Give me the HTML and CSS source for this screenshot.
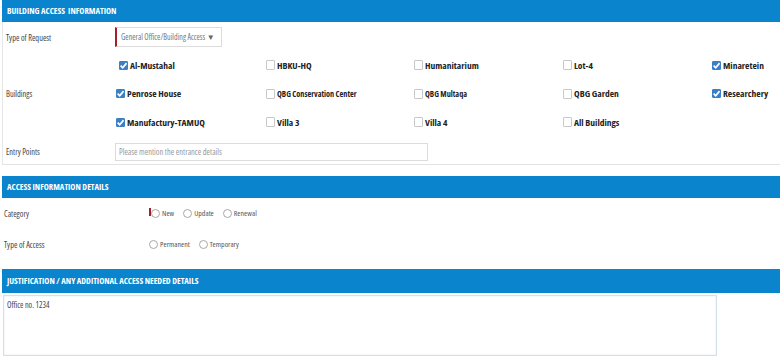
FILE: index.html
```html
<!DOCTYPE html>
<html lang="en">
<head>
    <meta charset="UTF-8">
    <title>Building Access</title>
    <link rel="stylesheet" href="styles.css">
</head>
<body>
    <div class="page">
        <div class="bar">BUILDING ACCESS&nbsp; INFORMATION</div>
        <div class="section first">
            <div class="row request">
                <span class="lbl">Type of Request</span>
                <div class="select">General Office/Building Access <span class="caret">&#9660;</span></div>
            </div>
            <div class="buildings">
                <span class="lbl">Buildings</span>
                <div class="grid">
                    <label class="chk lead"><input type="checkbox" checked> Al-Mustahal</label>
                    <label class="chk"><input type="checkbox"> HBKU-HQ</label>
                    <label class="chk"><input type="checkbox"> Humanitarium</label>
                    <label class="chk"><input type="checkbox"> Lot-4</label>
                    <label class="chk"><input type="checkbox" checked> Minaretein</label>

                    <label class="chk"><input type="checkbox" checked> Penrose House</label>
                    <label class="chk small"><input type="checkbox"> QBG Conservation Center</label>
                    <label class="chk small"><input type="checkbox"> QBG Multaqa</label>
                    <label class="chk"><input type="checkbox"> QBG Garden</label>
                    <label class="chk"><input type="checkbox" checked> Researchery</label>

                    <label class="chk"><input type="checkbox" checked> Manufactury-TAMUQ</label>
                    <label class="chk"><input type="checkbox"> Villa 3</label>
                    <label class="chk"><input type="checkbox"> Villa 4</label>
                    <label class="chk"><input type="checkbox"> All Buildings</label>
                </div>
            </div>
            <div class="row entry">
                <span class="lbl">Entry Points</span>
                <input type="text" class="field" placeholder="Please mention the entrance details">
            </div>
        </div>

        <div class="bar">ACCESS INFORMATION DETAILS</div>
        <div class="section second">
            <div class="row radios">
                <span class="lbl wide">Category</span>
                <span class="req"></span>
                <label class="rad"><input type="radio" name="cat"> New</label>
                <label class="rad"><input type="radio" name="cat"> Update</label>
                <label class="rad"><input type="radio" name="cat"> Renewal</label>
            </div>
            <div class="row radios">
                <span class="lbl wide">Type of Access</span>
                <label class="rad"><input type="radio" name="acc"> Permanent</label>
                <label class="rad"><input type="radio" name="acc"> Temporary</label>
            </div>
        </div>

        <div class="bar tall">JUSTIFICATION / ANY ADDITIONAL ACCESS NEEDED DETAILS</div>
        <textarea class="notes">Office no. 1234</textarea>
    </div>
</body>
</html>
```

FILE: styles.css
```css
html, body {
    margin: 0;
    padding: 0;
    background: #ffffff;
    font-family: "Open Sans", "Liberation Sans", Arial, sans-serif;
    font-stretch: 75%;
    color: #333;
}

.page {
    width: 780px;
    padding-left: 2px;
    box-sizing: border-box;
}

.bar {
    height: 22px;
    line-height: 22px;
    background: #0a84cc;
    color: #fff;
    font-size: 8.6px;
    font-weight: bold;
    padding-left: 5px;
}

.bar.tall {
    height: 24px;
    line-height: 24px;
}

.section.first {
    border-left: 1px solid #e6e6e6;
    border-bottom: 1px solid #e3e3e3;
    padding: 5px 0 3px 0;
    margin-bottom: 11px;
}

.row {
    display: flex;
    align-items: center;
}

.lbl {
    width: 109px;
    padding-left: 3px;
    font-size: 8.3px;
    color: #444;
    flex: none;
}

.lbl.wide {
    width: 145px;
    padding-left: 2px;
}

.select {
    width: 100px;
    height: 18px;
    line-height: 18px;
    border: 1px solid #dcdcdc;
    border-left: 2px solid #a3202a;
    font-size: 8px;
    color: #777;
    padding-left: 4px;
    box-sizing: content-box;
    white-space: nowrap;
}

.caret {
    color: #666;
    font-size: 8px;
}

.buildings {
    display: flex;
    align-items: center;
    margin-top: 4px;
}

.grid {
    display: grid;
    grid-template-columns: 150px 148px 149px 149px auto;
    grid-auto-rows: 28.5px;
    align-items: center;
}

.chk {
    display: flex;
    align-items: center;
    font-size: 9.5px;
    font-weight: bold;
    color: #222;
    white-space: nowrap;
}

.chk.small {
    font-size: 8.2px;
}

.chk.lead {
    padding-left: 3px;
}

.chk input {
    appearance: none;
    width: 9px;
    height: 10px;
    margin: 0 2px 0 1px;
    border: 1px solid #c8c8c8;
    border-radius: 1px;
    background: #fff;
    box-sizing: border-box;
}

.chk input:checked {
    border-color: #3b7fc4;
    background: #3b7fc4 url("data:image/svg+xml,%3Csvg xmlns='http://www.w3.org/2000/svg' viewBox='0 0 10 10'%3E%3Cpath d='M1.8 5.2 L4.1 7.5 L8.4 2.4' fill='none' stroke='white' stroke-width='1.9'/%3E%3C/svg%3E") center/9px no-repeat;
    height: 9px;
}

.entry {
    margin-top: 6px;
}

.field {
    width: 313px;
    height: 18px;
    box-sizing: border-box;
    border: 1px solid #dcdcdc;
    font-family: inherit;
    font-stretch: inherit;
    font-size: 8.4px;
    padding: 0 3px;
    color: #555;
}

.field::placeholder {
    color: #999;
}

.section.second {
    margin-bottom: 9px;
}

.radios {
    height: 31px;
}

.req {
    width: 2px;
    height: 8px;
    margin-top: -3px;
    background: #a3202a;
}

.rad {
    display: flex;
    align-items: center;
    font-size: 7.8px;
    color: #555;
    margin-right: 9px;
}

.rad input {
    appearance: none;
    width: 9px;
    height: 9px;
    margin: 0 2px 0 0;
    border: 1px solid #a8a8a8;
    border-radius: 50%;
    background: #fff;
}

.notes {
    display: block;
    width: 714px;
    height: 61px;
    margin: 2px 0 0 1px;
    box-sizing: border-box;
    border: 1px solid #d2e2ea;
    box-shadow: inset 0 0 2px #dbe8ee;
    font-family: inherit;
    font-stretch: inherit;
    font-size: 8.2px;
    color: #444;
    padding: 3px 3px;
    resize: none;
}
```
